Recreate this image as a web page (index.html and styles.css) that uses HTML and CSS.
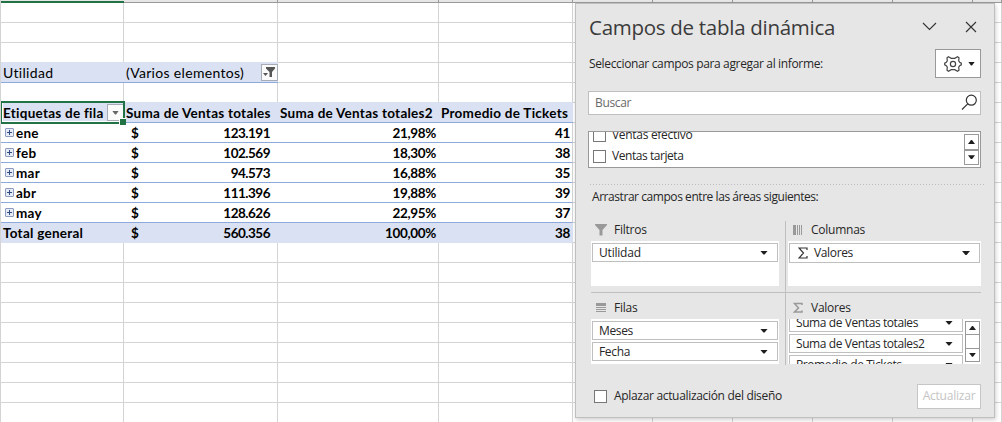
FILE: index.html
```html
<!DOCTYPE html>
<html lang="es">
<head>
<meta charset="utf-8">
<title>Tabla dinámica</title>
<link rel="stylesheet" href="styles.css">
</head>
<body>
<main class="sheet">
  <div class="colheads" id="heads"></div>
  <div class="grid" id="grid"></div>
</main>

<aside class="panel">
  <header class="head">
    <h1 class="title"><span>Campos de tabla dinámica</span></h1>
    <svg class="chev" width="15" height="9" viewBox="0 0 15 9"><path d="M1 1l6.5 6.5L14 1" fill="none" stroke="#333" stroke-width="1.1"/></svg>
    <svg class="close" width="12" height="12" viewBox="0 0 12 12"><path d="M1 1l10 10M11 1L1 11" fill="none" stroke="#333" stroke-width="1.1"/></svg>
  </header>
  <div class="sub">
    <span class="sub-text">Seleccionar campos para agregar al informe:</span>
    <button class="gear">
      <svg width="18" height="18" viewBox="0 0 18 18" fill="none" stroke="#444" stroke-width="1.2"><path d="M4.500 1.800L7.200 3.300h3.600L13.500 1.800l1.500 1-.3 3 1 1.500 1.600.9v1.600l-1.600.9-1 1.500.3 3-1.500 1-2.700-1.500H7.200l-2.700 1.500-1.500-1 .3-3-1-1.500L.7 9.800V8.200l1.600-.9 1-1.500-.3-3z"/><circle cx="9" cy="9" r="2.600"/></svg>
      <i class="tri"></i>
    </button>
  </div>
  <div class="search"><span>Buscar</span>
    <svg width="17" height="17" viewBox="0 0 17 17" fill="none" stroke="#333" stroke-width="1.200"><circle cx="10.300" cy="6.200" r="5"/><path d="M6.700 9.800L1 15.500"/></svg>
  </div>
  <div class="fields">
    <div class="field-list">
      <div class="field"><i class="check"></i><span class="f1">Ventas efectivo</span></div>
      <div class="field"><i class="check"></i><span class="f2">Ventas tarjeta</span></div>
    </div>
    <div class="scroll"><b><i class="tri up"></i></b><b><i class="tri"></i></b></div>
  </div>
  <div class="dots"></div>
  <p class="drag"><span>Arrastrar campos entre las áreas siguientes:</span></p>
  <div class="areas">
    <section class="area left top">
      <h2><svg width="12" height="12" viewBox="0 0 12 12"><path d="M0 0h12v1L7.500 6v5.500h-3V6L0 1z" fill="#999"/></svg><span>Filtros</span></h2>
      <div class="box"><div class="chip"><span class="loose">Utilidad</span><i class="tri"></i></div></div>
    </section>
    <section class="area right top">
      <h2><svg width="12" height="12" viewBox="0 0 12 12" shape-rendering="crispEdges"><path d="M1 1h3v10H1zM5 1h1v10H5zM7 1h1v10H7zM9 1h1v10H9z" fill="#999"/></svg><span>Columnas</span></h2>
      <div class="box"><div class="chip tall"><svg class="sig" width="10" height="12" viewBox="0 0 10 12"><path d="M9 3V1H1l4.500 5L1 11h8V9" fill="none" stroke="#333" stroke-width="1.200"/></svg><span>Valores</span><i class="tri"></i></div></div>
    </section>
    <section class="area left">
      <h2><svg width="12" height="12" viewBox="0 0 12 12" shape-rendering="crispEdges"><path d="M1 1h10v3H1zM1 5h10v1H1zM1 7h10v1H1zM1 9h10v1H1z" fill="#999"/></svg><span>Filas</span></h2>
      <div class="box"><div class="chip"><span>Meses</span><i class="tri"></i></div><div class="chip"><span>Fecha</span><i class="tri"></i></div></div>
    </section>
    <section class="area right">
      <h2><svg width="12" height="12" viewBox="0 0 12 12"><path d="M10 3V1.500H2.500L6.500 6l-4 4H10V8.500" fill="none" stroke="#999" stroke-width="1.500"/></svg><span>Valores</span></h2>
      <div class="box values">
        <div class="chips"><div class="chip"><span>Suma de Ventas totales</span><i class="tri"></i></div><div class="chip"><span>Suma de Ventas totales2</span><i class="tri"></i></div><div class="chip"><span>Promedio de Tickets</span><i class="tri"></i></div></div>
        <div class="scroll mini"><b><i class="tri up"></i></b><b class="thumb"></b><b><i class="tri"></i></b></div>
      </div>
    </section>
  </div>
  <footer class="foot"><i class="check"></i><span class="defer">Aplazar actualización del diseño</span><button class="update"><span>Actualizar</span></button></footer>
</aside>
<script src="sheet.js"></script>
</body>
</html>
```
FILE: styles.css
```css
* { box-sizing: border-box; }
body { margin: 0; width: 1002px; height: 422px; overflow: hidden; background: #fff; position: relative; }
span { white-space: nowrap; }

/* Spreadsheet */
.sheet { width: 1002px; height: 422px; overflow: hidden; border-left: 1px solid #d4d4d4; font: 14px Lato, sans-serif; letter-spacing: .32px; color: #000; }
.colheads, .row { display: grid; grid-template-columns: 123px 154px 161px 134px repeat(5, 80px) 29px; }
.colheads { height: 3px; }
.colheads div { background: #e6e6e6; border-right: 1px solid #999; border-bottom: 1px solid #999; }
.colheads div:first-child { border-bottom: 2px solid #217346; border-right: 0; margin-left: -1px; }
.row { height: 20px; }
.cell { display: flex; align-items: center; border-right: 1px solid #d4d4d4; border-bottom: 1px solid #d4d4d4; padding: 1px 2px 0; position: relative; height: 20px; }
.cell span { line-height: 18px; }
.fill { background: #d9e1f2; border-right: 0; padding-right: 3px; border-bottom-color: #8ea9db; box-shadow: 0 -1px #d9e1f2; }
.data { border-right: 0; padding-right: 3px; border-bottom-color: #8ea9db; }
.data.last { border-right: 1px solid #d4d4d4; padding-right: 2px; }
.total { border-bottom-color: #d9e1f2; box-shadow: none; }
.bold { font-weight: 700; font-size: 13.5px; letter-spacing: .26px; }
.current { z-index: 1; }
.num { justify-content: flex-end; letter-spacing: -.35px; }
.money { justify-content: space-between; padding: 1px 8px 1px 7px; letter-spacing: -.5px; }
.plus { width: 9px; height: 9px; flex: none; margin: -2px 2px 0 2px; border: 1px solid #8a9bbd; border-radius: 1px; background: linear-gradient(#2f4b80, #2f4b80) center/5px 1px no-repeat, linear-gradient(#2f4b80, #2f4b80) center/1px 5px no-repeat, #e6ebf5; }
.filter { position: absolute; right: 0; top: 1px; width: 17px; height: 17px; background: #fafafa; border: 1px solid #a6acb5; display: flex; align-items: center; justify-content: center; }
.active { position: absolute; left: -1px; top: -2px; width: 125px; height: 23px; border: 2px solid #217346; box-shadow: inset 0 -1px #fff, inset 1px 0 #fff; }
.active::after { content: ""; position: absolute; right: -3px; bottom: -3px; width: 6px; height: 6px; background: #217346; border: solid #fff; border-width: 1px 0 0 1px; }

/* Task pane */
.panel { position: absolute; left: 575px; top: 3px; width: 420px; height: 415px; background: #e6e6e6; border: 1px solid #bfbfbf; box-shadow: 1px 2px 4px rgba(0,0,0,.18); padding: 0 13px 0 12px; font: 12px "Open Sans", sans-serif; letter-spacing: -.35px; color: #262626; }
.head { display: flex; align-items: center; height: 45px; padding-left: 1px; }
.title { margin: 0; flex: 1; font-weight: 400; font-size: 20.5px; letter-spacing: -.28px; color: #3b3b3b; }
.chev { margin-right: 28px; }
.close { margin-right: 4px; }
.sub { display: flex; justify-content: space-between; align-items: center; height: 29px; padding-left: 1px; }
.sub-text { letter-spacing: -.35px; }
.gear { width: 46px; height: 29px; padding: 0 5px 0 8px; background: #fff; border: 1px solid #999; display: flex; align-items: center; justify-content: space-between; }
.tri { width: 7px; height: 4px; flex: none; background: #1e1e1e; clip-path: polygon(0 0, 100% 0, 57% 100%, 43% 100%); }
.filter .tri { background: #666; }
.tri.up { transform: scaleY(-1); }
.chip .tri { width: 8px; }
.search { height: 24px; margin-top: 13px; background: #fff; border: 1px solid #bfbfbf; display: flex; align-items: center; justify-content: space-between; padding: 0 2px 2px 6px; color: #6a6a6a; }
.fields { height: 37px; margin-top: 16px; background: #fff; border: 1px solid #999; display: flex; justify-content: space-between; overflow: hidden; padding-right: 1px; }
.field-list { margin-top: -7px; padding-left: 4px; }
.field { display: flex; align-items: center; gap: 6px; height: 21px; }
.field span { padding-bottom: 3px; }
.f1 { letter-spacing: -.3px; }
.f2 { letter-spacing: -.44px; }
.check { width: 13px; height: 13px; flex: none; background: #fff; border: 1px solid #777; }
.scroll { width: 15px; height: 31px; margin-top: 2px; display: flex; flex-direction: column; background: #999; border: 1px solid #999; gap: 2px; }
.scroll b { flex: 1; background: #fff; display: flex; align-items: center; justify-content: center; }
.dots { height: 1px; margin: 16px -3px 0 2px; background: repeating-linear-gradient(90deg, #bdbdbd 0 1px, transparent 1px 3px); }
.drag { margin: 0 0 0 4px; height: 36px; line-height: 24px; letter-spacing: -.44px; }
.areas { display: grid; grid-template-columns: 195px 195px; grid-template-rows: 72px 72px; margin-left: 3px; width: 390px; }
.left { border-right: 1px solid #bfbfbf; padding-right: 6px; }
.right { padding-left: 2px; }
.top { border-bottom: 1px solid #bfbfbf; }
.area h2 { margin: 0; height: 20px; font: inherit; letter-spacing: -.25px; display: flex; align-items: center; gap: 7px; padding: 0 0 2px 4px; }
.area h2 span { padding-bottom: 1px; }
.area:not(.top) h2 { height: 26px; padding: 3px 0 0 4px; }
.box { height: 45px; background: #fff; padding: 2px 1px; overflow: hidden; }
.chip { height: 19px; margin-bottom: 2px; border: 1px solid #bfbfbf; display: flex; align-items: center; padding: 0 9px 0 6px; }
.chip .tri { margin-left: auto; }
.chip.tall { height: 20px; padding-left: 8px; }
.chip.tall span { padding-bottom: 1px; }
.loose { letter-spacing: -.2px; }
.sig { margin-right: 6px; }
.values { display: flex; justify-content: space-between; letter-spacing: -.41px; }
.chips { width: 174px; margin-top: -8px; }
.mini { margin: 0; height: 41px; gap: 1px; }
.foot { display: flex; align-items: center; height: 25px; margin-top: 19px; padding-left: 6px; }
.defer { margin-left: 7px; letter-spacing: -.32px; padding-bottom: 2px; }
.update { margin-left: auto; width: 64px; height: 25px; background: #fff; border: 1px solid #c6c6c6; font: inherit; letter-spacing: -.22px; color: #c4c4c4; padding: 0 0 2px; }
```
FILE: sheet.js
```javascript
const rows = [['ene','123.191','21,98%','41'],['feb','102.569','18,30%','38'],['mar','94.573','16,88%','35'],['abr','111.396','19,88%','39'],['may','128.626','22,95%','37']];
const cell = (c, h = '') => `<div class="cell ${c}">${h}</div>`;
const t = s => `<span>${s}</span>`;
const blank = n => cell('').repeat(n);
const row = h => `<div class="row">${h}</div>`;
document.getElementById('heads').innerHTML = '<div></div>'.repeat(10);
let h = row(blank(10)).repeat(3);
h += row(cell('fill', t('Utilidad')) + cell('fill', t('(Varios elementos)') + '<i class="filter"><svg width="13" height="11" viewBox="0 0 13 11"><path d="M3 0h9v1.500L9 5v5H6.500V5L3 1.500zM0 6h5L2.500 9z" fill="#555"/></svg></i>') + blank(8));
h += row(blank(10));
h += row(cell('fill bold current', t('Etiquetas de fila') + '<i class="filter"><i class="tri"></i></i><i class="active"></i>') + cell('fill bold', t('Suma de Ventas totales')) + cell('fill bold', t('Suma de Ventas totales2')) + cell('fill bold', t('Promedio de Tickets')) + blank(6));
for (const r of rows) h += row(cell('data bold', '<i class="plus"></i>' + t(r[0])) + cell('data bold money', t('$') + t(r[1])) + cell('data bold num', t(r[2])) + cell('data bold num last', t(r[3])) + blank(6));
h += row(cell('fill total bold', t('Total general')) + cell('fill total bold money', t('$') + t('560.356')) + cell('fill total bold num', t('100,00%')) + cell('fill total bold num', t('38')) + blank(6));
h += row(blank(10)).repeat(10);
document.getElementById('grid').innerHTML = h;
```
